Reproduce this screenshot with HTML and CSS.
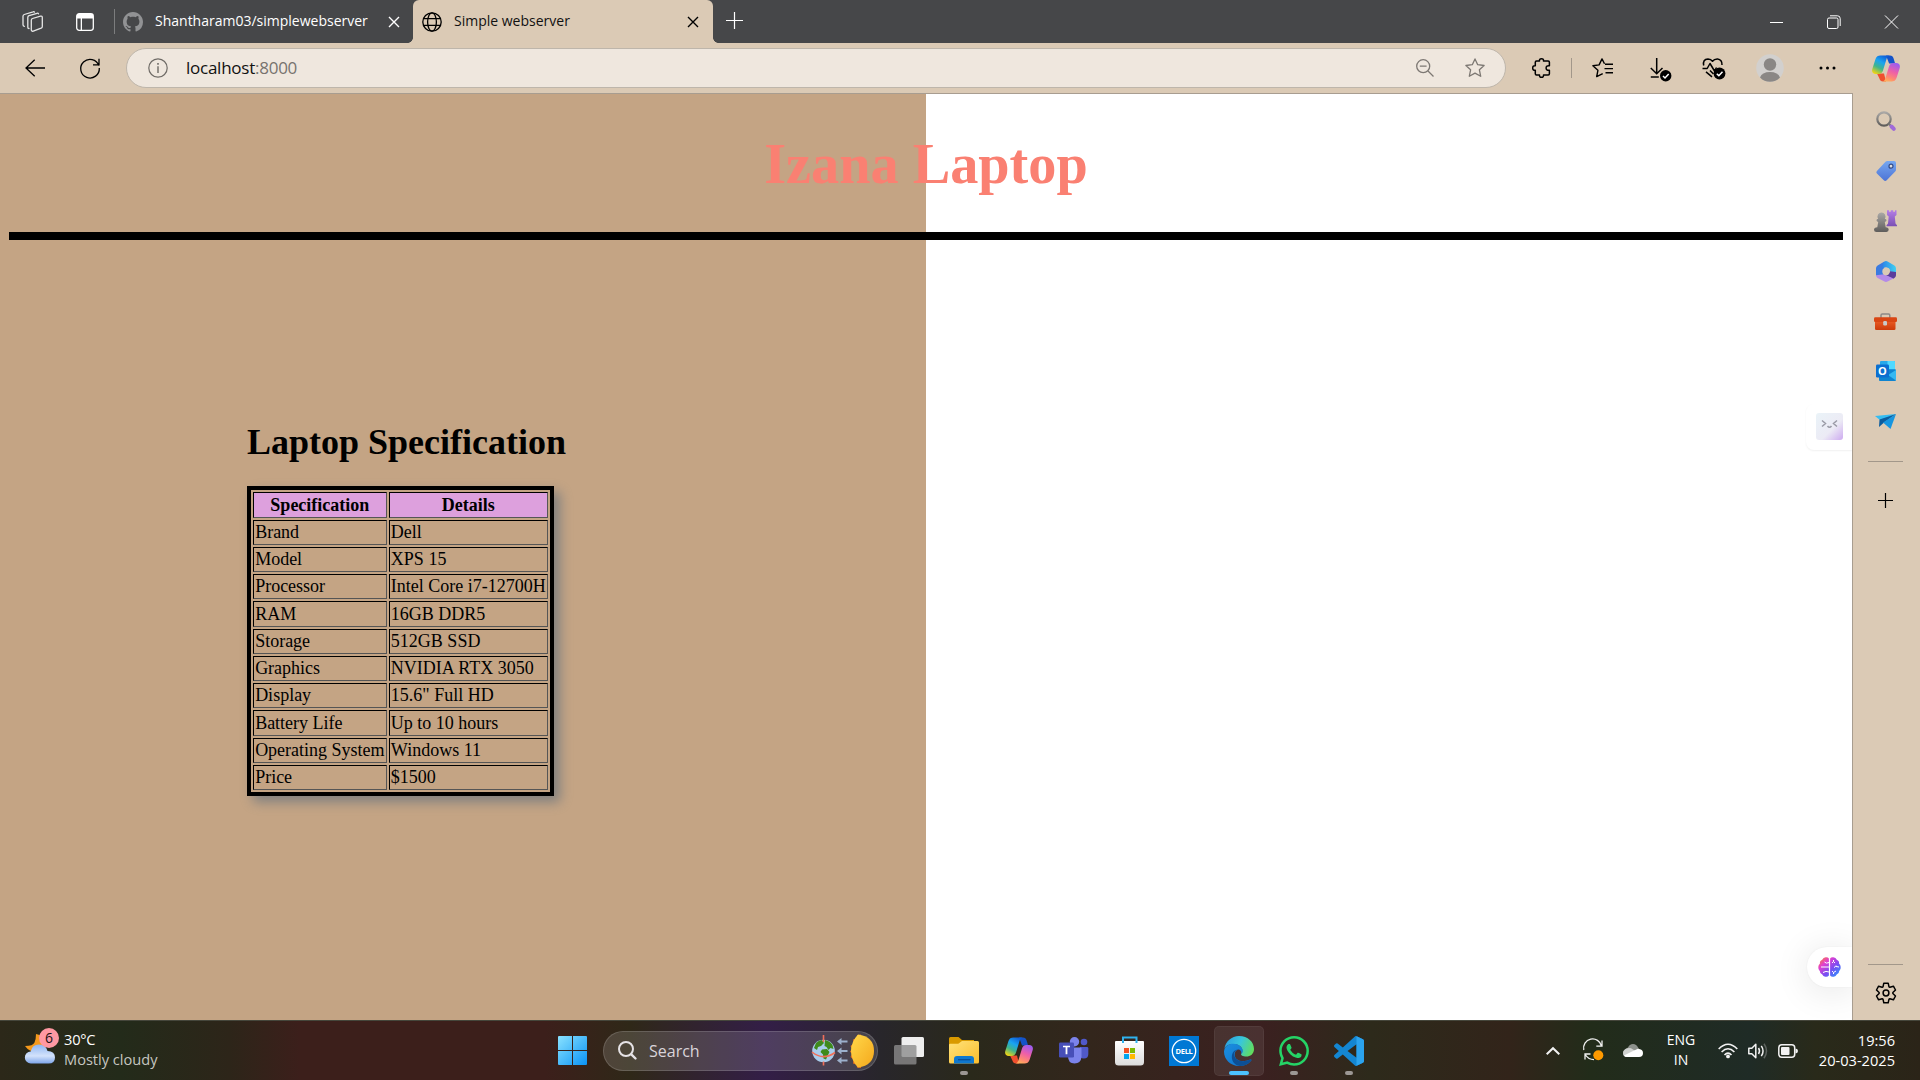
FILE: index.html
```html
<!DOCTYPE html>
<html lang="en">
<head>
<meta charset="utf-8">
<title>Simple webserver</title>
<link rel="stylesheet" href="styles.css">
</head>
<body>
<svg class="defs" width="0" height="0" aria-hidden="true">
  <defs>
    <linearGradient id="cpBlue" x1="0.7" y1="0" x2="0.2" y2="1"><stop offset="0" stop-color="#0f5fd8"/><stop offset=".35" stop-color="#1aa4f0"/><stop offset=".65" stop-color="#3fb58c"/><stop offset="1" stop-color="#f4d411"/></linearGradient>
    <linearGradient id="cpPink" x1="0.7" y1="0" x2="0.3" y2="1"><stop offset="0" stop-color="#9c5cf0"/><stop offset=".45" stop-color="#ee5fa8"/><stop offset=".8" stop-color="#ff8a70"/><stop offset="1" stop-color="#ffb05c"/></linearGradient>
    <linearGradient id="purple" x1="0" y1="0" x2="0" y2="1"><stop offset="0" stop-color="#b57ee6"/><stop offset="1" stop-color="#7a4fb4"/></linearGradient>
    <linearGradient id="gray" x1="0" y1="0" x2="0" y2="1"><stop offset="0" stop-color="#aaa8a6"/><stop offset="1" stop-color="#5f5d5b"/></linearGradient>
    <linearGradient id="tag" x1="0" y1="0" x2="0" y2="1"><stop offset="0" stop-color="#76a7f0"/><stop offset="1" stop-color="#4d74d6"/></linearGradient>
    <linearGradient id="red" x1="0" y1="0" x2="0" y2="1"><stop offset="0" stop-color="#f0622a"/><stop offset="1" stop-color="#cc3a0a"/></linearGradient>
    <linearGradient id="brain" x1="0" y1="0" x2="1" y2="1"><stop offset="0" stop-color="#ff8a1c"/><stop offset=".3" stop-color="#e23fd0"/><stop offset=".6" stop-color="#7a4df2"/><stop offset="1" stop-color="#1fa0ff"/></linearGradient>
    <linearGradient id="win" x1="0" y1="0" x2="1" y2="1"><stop offset="0" stop-color="#8ae2ff"/><stop offset="1" stop-color="#0a93f5"/></linearGradient>
    <linearGradient id="sun" x1="0" y1="0" x2="1" y2="1"><stop offset="0" stop-color="#ffd84a"/><stop offset="1" stop-color="#f5a81c"/></linearGradient>
    <linearGradient id="folder" x1="0" y1="0" x2="1" y2="1"><stop offset="0" stop-color="#ffe27a"/><stop offset="1" stop-color="#fbbd2c"/></linearGradient>
    <linearGradient id="edgeTop" x1="0" y1="0.3" x2="1" y2="0.6"><stop offset="0" stop-color="#2b9fe0"/><stop offset=".5" stop-color="#38c6dc"/><stop offset="1" stop-color="#62dd5c"/></linearGradient>
    <linearGradient id="edgeLow" x1="0" y1="0" x2="1" y2="1"><stop offset="0" stop-color="#1b8fe0"/><stop offset="1" stop-color="#0f6fc8"/></linearGradient>
    <linearGradient id="cloud" x1="0" y1="0" x2="0" y2="1"><stop offset="0" stop-color="#8fb6f2"/><stop offset=".6" stop-color="#d3e2fb"/><stop offset="1" stop-color="#7ea6ea"/></linearGradient>
    <linearGradient id="face" x1="0" y1="0" x2="1" y2="1"><stop offset="0" stop-color="#eaf3f8"/><stop offset=".6" stop-color="#ecebf5"/><stop offset="1" stop-color="#cdaaf0"/></linearGradient>
    <linearGradient id="bag" x1="0" y1="0" x2="0" y2="1"><stop offset="0" stop-color="#fff"/><stop offset="1" stop-color="#dcdcdc"/></linearGradient>
    <linearGradient id="m365a" x1="0" y1="0" x2="1" y2="0"><stop offset="0" stop-color="#2d86e8"/><stop offset="1" stop-color="#3fd0f2"/></linearGradient>
    <symbol id="copilot" viewBox="0 0 28 27">
      <path fill="#1453c8" d="M14 .5h4c2 0 3 1 3.600 3l1.500 5h-6z"/>
      <path fill="#f0502e" d="M5 18.500h7l2 8h-3c-2 0-3-1-3.600-3z"/>
      <path fill="url(#cpBlue)" d="M8.500.5h9c-1.600.4-2.300 1.500-2.900 3.300L11 15.500c-.7 2.200-2 3.500-4.300 3.500H3.800C1 19-.5 17 .3 14L3.500 4C4.300 1.600 6 .5 8.500.5z"/>
      <path fill="url(#cpPink)" d="M19.500 26.500h-9c1.600-.4 2.300-1.500 2.900-3.300L17 11.500C17.700 9.300 19 8 21.300 8h2.900c2.800 0 4.300 2 3.500 5l-3.200 10c-.8 2.400-2.500 3.500-5 3.500z"/>
    </symbol>
  </defs>
</svg>

<header class="tabstrip">
  <svg class="workspaces" width="22" height="22" viewBox="0 0 22 22" fill="none" stroke="#e6e6e6" stroke-width="1.300" stroke-linejoin="round" stroke-linecap="round"><path d="M9.300 9.200q0-1.300 1.200-1.700l8-2.300q1.800-.4 1.800 1.400v8.800q0 1.300-1.200 1.800l-7.800 2.900q-2 .6-2-1.300z"/><path d="M16.500 2.800q-.4-.8-1.500-.5L7 4.700q-1.200.4-1.200 1.700v9.800q0 1.200 1.200 1.300"/><path d="M12.500 1q-.6-.5-1.400-.2L2.200 3.500Q1 4 1 5.200v8.600q0 1.300 1.300 1.500"/></svg>
  <svg class="tab-actions" width="18" height="18" viewBox="0 0 18 18"><rect x=".7" y=".7" width="16.600" height="16.600" rx="2.500" fill="none" stroke="#fff" stroke-width="1.300"/><path fill="#fff" d="M1 1h16v4.500H1zM4.700 5H6v12H4.700z"/></svg>
  <span class="strip-divider"></span>
  <div class="tab">
    <svg width="20" height="20" viewBox="0 0 16 16" fill="#919294"><path d="M8 0C3.580 0 0 3.580 0 8c0 3.540 2.290 6.530 5.470 7.590.4.07.55-.17.55-.38 0-.19-.01-.82-.01-1.490-2.010.37-2.530-.49-2.690-.94-.09-.23-.48-.94-.82-1.130-.28-.15-.68-.52-.01-.53.63-.01 1.080.58 1.230.82.72 1.210 1.870.87 2.330.66.07-.52.28-.87.51-1.070-1.780-.2-3.640-.89-3.640-3.950 0-.87.31-1.590.82-2.150-.08-.2-.36-1.020.08-2.120 0 0 .67-.21 2.200.82.64-.18 1.320-.27 2-.27s1.360.09 2 .27c1.530-1.040 2.200-.82 2.200-.82.44 1.100.16 1.920.08 2.120.51.56.82 1.270.82 2.150 0 3.070-1.870 3.750-3.650 3.950.29.25.54.73.54 1.480 0 1.070-.01 1.930-.01 2.200 0 .21.15.46.55.38A8.010 8.010 0 0 0 16 8c0-4.420-3.580-8-8-8z"/></svg>
    <span class="tab-title">Shantharam03/simplewebserver</span>
    <svg class="tab-close" width="10" height="10" viewBox="0 0 10 10" stroke="#fff" stroke-width="1.400"><path d="M0 0l10 10M10 0L0 10"/></svg>
  </div>
  <div class="tab tab-active">
    <svg width="20" height="20" viewBox="0 0 20 20" fill="none" stroke="#000" stroke-width="1.300"><circle cx="10" cy="10" r="9.200"/><ellipse cx="10" cy="10" rx="4.400" ry="9.200"/><path d="M1.500 6.600h17M1.500 13.400h17"/></svg>
    <span class="tab-title">Simple webserver</span>
    <svg class="tab-close" width="10" height="10" viewBox="0 0 10 10" stroke="#000" stroke-width="1.400"><path d="M0 0l10 10M10 0L0 10"/></svg>
  </div>
  <svg class="new-tab" width="17" height="17" viewBox="0 0 17 17" stroke="#fff" stroke-width="1.200"><path d="M8.500 0v17M0 8.500h17"/></svg>
  <div class="window-buttons">
    <svg width="13" height="14" viewBox="0 0 13 14" stroke="#fff"><path d="M0 7.500h13"/></svg>
    <svg width="14" height="14" viewBox="0 0 14 14" fill="none" stroke="#fff"><rect x=".5" y="3" width="10.500" height="10.500" rx="1.500"/><path d="M3 .8h7.500q2.700 0 2.700 2.700V11"/></svg>
    <svg width="13" height="14" viewBox="0 0 13 14" stroke="#fff"><path d="M0 .5l13 13M13 .5l-13 13"/></svg>
  </div>
</header>

<nav class="toolbar">
  <svg width="20" height="18" viewBox="0 0 20 18" fill="none" stroke="#000" stroke-width="1.300"><path d="M20 9H1M9.700.7L1 9l8.700 8.300"/></svg>
  <svg class="reload" width="20" height="20" viewBox="0 0 20 20" fill="none" stroke="#000" stroke-width="1.300"><path d="M18.800 7.600A9.300 9.300 0 1 0 19.300 10M19 .8v6h-6"/></svg>
  <div class="address">
    <svg width="20" height="20" viewBox="0 0 20 20"><circle cx="10" cy="10" r="9.200" fill="none" stroke="#6f6b66" stroke-width="1.200"/><path fill="#6f6b66" d="M9.200 5h1.600v1.700H9.200zM9.300 8.300h1.400V15H9.300z"/></svg>
    <span class="url">localhost<span class="port">:8000</span></span>
    <svg class="zoom-out" width="18" height="18" viewBox="0 0 18 18" fill="none" stroke="#7d7873" stroke-width="1.300"><circle cx="7.200" cy="7.200" r="6.500"/><path d="M12 12l5.500 5.500M3.800 7.200h6.800"/></svg>
    <svg width="20" height="20" viewBox="0 0 20 20" fill="none" stroke="#7d7873" stroke-width="1.300" stroke-linejoin="round"><path d="M10 .9l2.700 5.800 6.400.8-4.700 4.300 1.300 6.500-5.700-3.200-5.700 3.200 1.300-6.500L.9 7.500l6.400-.8z"/></svg>
  </div>
  <svg class="puzzle" width="19" height="20" viewBox="0 0 19 20" fill="none" stroke="#000" stroke-width="1.500" stroke-linejoin="round"><path d="M3.300 4.300q0-1.200 1.200-1.200H7.500q-.3-2.400 2-2.400t2 2.400h4.700q1.200 0 1.200 1.200v3.400q-3.300-.4-3.300 2.300t3.300 2.300v3.400q0 1.200-1.200 1.200H11.500q.3 2.400-2 2.400t-2-2.400H4.500q-1.200 0-1.200-1.200v-3.400Q.7 12.500.7 10t2.600-2.300z"/></svg>
  <span class="bar-divider"></span>
  <svg class="favorites" width="21" height="20" viewBox="0 0 21 20" fill="none" stroke="#000" stroke-width="1.400" stroke-linejoin="round"><path d="M10.700 15.600l-6 3 1.200-6.300L.9 7.800l6.200-.9L10 .9l2.500 4.800M13 6.300h8M12.500 10.600H21M13.500 14.700H21"/></svg>
  <svg class="download" width="22" height="24" viewBox="0 0 22 24" fill="none" stroke="#000" stroke-width="1.500"><path d="M6.700 0v15.500M.8 10l5.900 5.700L12.500 10M.8 19h8"/><circle cx="15.700" cy="17.800" r="5.700" fill="#000" stroke="none"/><path stroke="#fff" d="M13 18l2 2 3.700-4"/></svg>
  <svg class="essentials" width="24" height="22" viewBox="0 0 24 22" fill="none" stroke="#000" stroke-width="1.500" stroke-linejoin="round"><path d="M1.700 7.500Q.5 1.200 6 1q3 0 4.500 2.300Q12.200.9 15.500 1q4.700.5 4.500 6M.5 10.500h4.700L8 5.500l4.500 7.500 2-3.500M4 13.800l6 5M8 12.500l3.500 3.500"/><circle cx="17.500" cy="15.500" r="5.900" fill="#000" stroke="none"/><path stroke="#fff" d="M14.800 15.700l2 2 3.700-4"/></svg>
  <svg class="avatar" width="28" height="28" viewBox="0 0 28 28"><circle cx="14" cy="14" r="13.800" fill="#d2d0ce"/><circle cx="14" cy="10.500" r="6.200" fill="#8a8785"/><path fill="#8a8785" d="M4 23.500Q6 18 14 18t10 5.500a13.800 13.800 0 0 1-20 0z"/></svg>
  <svg class="more" width="17" height="4" viewBox="0 0 17 4"><circle cx="2" cy="2" r="1.500"/><circle cx="8.500" cy="2" r="1.500"/><circle cx="15" cy="2" r="1.500"/></svg>
  <svg class="copilot-button" width="28" height="27"><use href="#copilot"/></svg>
</nav>

<div class="workspace">
  <main class="page">
    <h1 class="title">Izana Laptop</h1>
    <hr class="rule">
    <section class="spec">
      <h1 class="spec-title">Laptop Specification</h1>
      <table class="spec-table">
        <tr><th>Specification</th><th>Details</th></tr>
        <tr><td>Brand</td><td>Dell</td></tr>
        <tr><td>Model</td><td>XPS 15</td></tr>
        <tr><td>Processor</td><td>Intel Core i7-12700H</td></tr>
        <tr><td>RAM</td><td>16GB DDR5</td></tr>
        <tr><td>Storage</td><td>512GB SSD</td></tr>
        <tr><td>Graphics</td><td>NVIDIA RTX 3050</td></tr>
        <tr><td>Display</td><td>15.6" Full HD</td></tr>
        <tr><td>Battery Life</td><td>Up to 10 hours</td></tr>
        <tr><td>Operating System</td><td>Windows 11</td></tr>
        <tr><td>Price</td><td>$1500</td></tr>
      </table>
    </section>
    <div class="float-face">
      <svg width="27" height="27" viewBox="0 0 27 27" fill="none"><rect width="27" height="27" rx="3" fill="url(#face)"/><path stroke="#9a9ba6" stroke-width="1.500" d="M6 7.500l3.500 3L6 13.500M21 7.500l-3.500 3 3.500 3M11.500 13q2 2.500 4 0"/></svg>
    </div>
    <div class="float-brain">
      <svg width="23" height="20" viewBox="0 0 23 20"><path fill="url(#brain)" d="M10.900 1.500v17Q9.500 20.300 7.200 19.700 5 19.500 4.300 17.500 1.800 17 1.900 14.300 0 12.800.3 10q.2-2.300 1.600-3.300Q1.500 3.700 4.200 2.700 5.200.3 7.700.2 10 0 10.900 1.500zM12.100 1.500v17q1.400 1.800 3.700 1.200 2.200-.2 2.900-2.200 2.500-.5 2.400-3.200 1.900-1.500 1.600-4.300-.2-2.300-1.600-3.300.4-3-2.300-4Q17.800.3 15.300.2 13 0 12.100 1.500z"/><path fill="none" stroke="#fff" stroke-width="1" d="M11 5.500q-3 1.500-4.500-.5M3 10h8M5 15.500q3-2 6-.5M14 6l1.500-1.500L17 6M15.500 4.500V3M16 10.500q2-1 2-2M18 9.500l3 .5M14 14l1.500 1.500L18 14M15.500 15.500V17"/></svg>
    </div>
  </main>
  <aside class="sidebar">
    <div class="slot"><svg width="20" height="20" viewBox="0 0 20 20" fill="none"><circle cx="8" cy="8" r="6.700" stroke="url(#gray)" stroke-width="2.200"/><path stroke="#777" stroke-width="2" d="M12.500 12.500l2 2"/><path stroke="#a06ad8" stroke-width="4" stroke-linecap="round" d="M15.500 15.500l2.300 2.300"/></svg></div>
    <div class="slot"><svg width="20" height="20" viewBox="0 0 20 20"><path fill="url(#tag)" d="M9.500.8Q10.200 0 11.300 0H18q2 0 2 2v6.800q0 1-.8 1.800l-8.500 8.700q-1.500 1.300-2.900 0L.9 12.600q-1.200-1.300 0-2.600z"/><circle cx="15" cy="5.200" r="2" fill="#ddd" stroke="#324a86" stroke-width="1.200"/></svg></div>
    <div class="slot"><svg width="23" height="22" viewBox="0 0 23 22"><path fill="url(#gray)" d="M7.500 2.500a4 4 0 0 1 3.300 6.200q1.700.4 1.700 1.500T10.800 12l.9 5.200q3 .3 3 2.400T12.500 22h-10Q0 22 0 19.700t3.300-2.500L4.200 12q-1.700-.4-1.700-1.700t1.700-1.600a4 4 0 0 1 3.300-6.200z"/><path fill="url(#purple)" d="M13 .3h2v1.500h1.800V.3h2.400v1.500H21V.3h1.500V5l-1.700 1.500.7 7 1.500 1.700v1H12.500v-1l1.500-1.700.7-7L13 5z"/></svg></div>
    <div class="slot"><svg width="20" height="21" viewBox="0 0 20 21"><path fill="#3b7be0" d="M8 .7L1.600 4.400Q0 5.300 0 7.200v7.300l4.500 1.500 3.500-2.500V7z"/><path fill="url(#m365a)" d="M8 .7Q10-.5 12 .7l6.400 3.700Q20 5.300 20 7.200v6.300l-6-3.200q.2-3.500-4-4L6.500 7q-.5-4 1.500-6.300z"/><path fill="#5a3d9c" d="M20 11v3.200q0 1.800-1.600 2.700l-1.600 1L9 13.900q3.800.6 5-3.600z"/><path fill="#b48ae8" d="M0 14.300l8-1.100 9.500 4.400-5.500 2.700q-2 1.200-4 0L1.600 17Q0 16 0 14.300z"/><circle cx="10" cy="10.500" r="3.700" fill="#dbcab5"/></svg></div>
    <div class="slot"><svg width="23" height="17" viewBox="0 0 23 17"><path fill="none" stroke="#8d8986" stroke-width="1.500" d="M7 5V2.300Q7 1 8.300 1h6.200q1.300 0 1.300 1.300V5"/><rect x="1" y="6" width="20.500" height="11" rx="1.300" fill="url(#red)"/><path fill="#d94614" d="M1.300 4.300h20.400q1.300 0 1.300 1.300V8q0 1-1.300 1H1.300Q0 9 0 8V5.600q0-1.300 1.300-1.300z"/><rect x="9.200" y="8" width="3.800" height="4.500" rx="1.200" fill="#c9c9c9"/></svg></div>
    <div class="slot"><svg width="20" height="20" viewBox="0 0 20 20"><path fill="#28a8ea" d="M5 0h13q1 0 1 1v10H4V1q0-1 1-1z"/><path fill="#50d9ff" d="M11.500 0H18q1 0 1 1v7h-7.500z"/><path fill="#0f84d0" d="M3 8.500h17V19q0 1-1 1H4q-1 0-1-1z"/><path fill="#35b8f1" d="M20 9v10.500L12 14z"/><rect y="3.500" width="13" height="13" rx="1.200" fill="#0c6fd0"/><text class="outlook-o" x="6.500" y="14.300" text-anchor="middle">O</text></svg></div>
    <div class="slot"><svg width="21" height="15" viewBox="0 0 21 15"><path fill="#35bdf2" d="M21 0L0 2l5.500 4.500z"/><path fill="#0b5c9e" d="M21 0L4.500 5.500 4 13l4.500-4z"/><path fill="#1695e0" d="M21 0L8 8.500 15.500 15z"/></svg></div>
    <span class="side-divider"></span>
    <svg class="side-add" width="15" height="15" viewBox="0 0 15 15" stroke="#000" stroke-width="1.200"><path d="M7.500 0v15M0 7.500h15"/></svg>
    <span class="side-divider side-bottom"></span>
    <svg class="settings" width="22" height="22" viewBox="-11 -11 22 22" fill="none" stroke="#000" stroke-width="1.500" stroke-linejoin="round"><path d="M-3-6.200L-2.200-9.800H2.200L3-6.200 3.870-5.700 7.400-6.800 9.500-3 6.870-.5V.5L9.500 3 7.400 6.800 3.870 5.700 3 6.200 2.200 9.800H-2.200L-3 6.200-3.870 5.700-7.400 6.800-9.500 3-6.870.5V-.5L-9.500-3-7.400-6.800-3.870-5.700z"/><circle r="2.900"/></svg>
  </aside>
</div>

<footer class="taskbar">
  <div class="weather">
    <svg width="30" height="30" viewBox="0 0 30 30"><path fill="#f59a1c" d="M11 0q8 1 9 9t-7 9Q5 19 0 12q8 0 9.500-3.500T11 0z"/><path fill="url(#cloud)" d="M6 29.500a6 6 0 0 1-.3-12Q7 10.500 14 10.500t8.500 6.500q7.500.3 7.500 6.500 0 6-6.500 6z"/></svg>
    <span class="badge">6</span>
    <div class="weather-text"><span class="temp">30°C</span><span class="sky">Mostly cloudy</span></div>
  </div>
  <svg class="start" width="29" height="29" viewBox="0 0 29 29" fill="url(#win)"><path d="M1 0h13v14H0V1q0-1 1-1zM15 0h13q1 0 1 1v13H15zM0 15h14v14H1q-1 0-1-1zM15 15h14v13q0 1-1 1H15z"/></svg>
  <div class="search">
    <svg width="19" height="19" viewBox="0 0 19 19" fill="none" stroke="#e6e3e6" stroke-width="2"><circle cx="8" cy="8" r="7"/><path stroke-linecap="round" stroke-width="2.400" d="M13.300 13.300l4.200 4.200"/></svg>
    <span class="search-text">Search</span>
    <svg class="search-art" width="63" height="34" viewBox="0 0 63 34"><circle cx="11.500" cy="17" r="11.300" fill="#a9cdec"/><path fill="#3f8a1c" d="M4 9q3-3 6-3l2 3-3 3-3 1-1 3-3-2zM13 6q5 1 7.500 5l1 4-3-1-2 2-2-3-2-1zM10 15.500l5-.5 2.500 3-1.500 3-2 4.500-2.500-1-.5-4-2.500-2.500z"/><path fill="none" stroke="#f0705a" stroke-width="1.600" d="M0 18q11 9 23 .5M11.500 1v7M11.500 27.500v4"/><path fill="none" stroke="#9cb0cc" stroke-width="2" d="M27 7.500h8.500M27 17h8.500M27 26.500h8.500"/><path fill="#9cb0cc" d="M29.500 4v7L25 7.500zM29.500 13.500v7L25 17zM29.500 23v7l-4.500-3.500z"/><path fill="#e8701a" d="M49 .5l-4 .7-.3 3.300-3.700 1 .5 4-3 2.500 1.500 3-2 2.500 2 2.500-1.500 3 3 2.500-.5 4 3.700 1 .3 3 4 .5z"/><path fill="url(#sun)" d="M46 .5q16 2 16 16.500T46 33.500Q39 26 39 17T46 .5z"/></svg>
  </div>
  <svg class="task-view" width="30" height="28" viewBox="0 0 30 28"><rect x="7.500" width="22.500" height="20" rx="1.500" fill="#eee"/><rect y="8" width="22.500" height="19.500" rx="1.500" fill="#8b8b8b" fill-opacity=".8"/></svg>
  <div class="apps">
    <div class="app running"><svg width="30" height="27" viewBox="0 0 30 27"><path fill="#d99a00" d="M1.500 0h8l3.500 3h12v8H0V1.500Q0 0 1.500 0z"/><path fill="url(#folder)" d="M0 8q0-1.300 1.300-1.300h8L13 4h15.500Q30 4 30 5.500V25q0 1.500-1.500 1.500h-27Q0 26.500 0 25z"/><path fill="#0f78cf" d="M5 26.500V22q0-3 3-3h14q3 0 3 3v4.500z"/><path stroke="#0a4f98" stroke-width="1.300" d="M9 22.700h12.500"/></svg></div>
    <div class="app"><svg width="28" height="27"><use href="#copilot"/></svg></div>
    <div class="app"><svg width="30" height="27" viewBox="0 0 30 27"><circle cx="25" cy="5" r="3.300" fill="#5059c9"/><path fill="#5059c9" d="M21 10h7q1.300 0 1.300 1.300V17q0 4.500-4.500 4.500T20 18z"/><circle cx="15.500" cy="4.700" r="4.700" fill="#7b83eb"/><path fill="#7b83eb" d="M9 10.500h12.500q1 0 1 1v8Q22 26.500 15.500 26.500T9 19z"/><rect y="5.500" width="15" height="15" rx="1.300" fill="#474fb8"/><path fill="#fff" d="M4 8.700h7v1.600H8.400v7H6.600v-7H4z"/></svg></div>
    <div class="app"><svg width="29" height="30" viewBox="0 0 29 30"><path fill="none" stroke="#2fb2ee" stroke-width="2" d="M8 7V1.500h13.500V7"/><path fill="url(#bag)" d="M1 5h27q1 0 1 1v20q0 3.500-3.500 3.500h-22Q0 29.500 0 26V6q0-1 1-1z"/><path stroke="#2fb2ee" stroke-width="2" d="M8 5v2M21.500 5v2"/><path fill="#f25022" d="M9 12h5v5H9z"/><path fill="#7fba00" d="M15 12h5v5h-5z"/><path fill="#00a4ef" d="M9 18h5v5H9z"/><path fill="#ffb900" d="M15 18h5v5h-5z"/></svg></div>
    <div class="app"><svg width="30" height="30" viewBox="0 0 30 30"><path fill="#0078d4" d="M0 0h30v30H0z"/><circle cx="15" cy="15" r="11.700" fill="none" stroke="#fff" stroke-width="1.300"/><text class="dell" x="15" y="17.800" text-anchor="middle">DELL</text></svg></div>
    <div class="app active"><svg width="30" height="30" viewBox="0 0 30 30"><path fill="url(#edgeTop)" d="M.3 13C1.500 5.500 7.500 0 15 0c9 0 15 6 15 13 0 5-3.700 7.500-7.700 7.500-3.300 0-6-1.200-5-2.800 1.500-2.200 1.600-5.200-.8-7.200C11 6.500 2.500 7.500.3 13z"/><path fill="url(#edgeLow)" d="M0 15.500C.5 10 5 7.500 9.500 7.700c5 .1 9.300 3.300 9.300 7.300 0 1.300-.7 2.300-1.500 3 .5-2.500-1-4.500-3.100-4.500-2.200.7-3.500 2.500-3.500 5 0 6 6.800 8.500 15.500 5 .9-.3 1.500.2 1.100.9C24.500 28 20 30 15 30 6.500 30 0 23.500 0 15.500z"/><path fill="#0d4f95" d="M10.200 18c0 6 7.500 9.500 16 5.500.9-.3 1.500.2 1.100.9-3 4-7 5.600-11.300 5.600-6-.5-9-6-8-11 .7-3.600 3.200-5.700 6.200-5.500-2.400.7-4 2-4 4.500z"/></svg></div>
    <div class="app running"><svg width="30" height="30" viewBox="0 0 24 24" fill="#25d366"><path d="M17.472 14.382c-.297-.149-1.758-.867-2.030-.967-.273-.099-.471-.148-.67.15-.197.297-.767.966-.94 1.164-.173.199-.347.223-.644.075-.297-.15-1.255-.463-2.390-1.475-.883-.788-1.480-1.761-1.653-2.059-.173-.297-.018-.458.13-.606.134-.133.298-.347.446-.52.149-.174.198-.298.298-.497.099-.198.05-.371-.025-.52-.075-.149-.669-1.612-.916-2.207-.242-.579-.487-.5-.669-.51-.173-.008-.371-.01-.57-.01-.198 0-.52.074-.792.372-.272.297-1.040 1.016-1.040 2.479 0 1.462 1.065 2.875 1.213 3.074.149.198 2.096 3.200 5.077 4.487.709.306 1.262.489 1.694.625.712.227 1.360.195 1.871.118.571-.085 1.758-.719 2.006-1.413.248-.694.248-1.289.173-1.413-.074-.124-.272-.198-.57-.347m-5.421 7.403h-.004a9.870 9.870 0 0 1-5.031-1.378l-.361-.214-3.741.982.998-3.648-.235-.374a9.860 9.860 0 0 1-1.510-5.260c.001-5.450 4.436-9.884 9.888-9.884 2.640 0 5.122 1.030 6.988 2.898a9.825 9.825 0 0 1 2.893 6.994c-.003 5.450-4.437 9.884-9.885 9.884m8.413-18.297A11.815 11.815 0 0 0 12.050 0C5.495 0 .16 5.335.157 11.892c0 2.096.547 4.142 1.588 5.945L.057 24l6.305-1.654a11.882 11.882 0 0 0 5.683 1.448h.005c6.554 0 11.890-5.335 11.893-11.893a11.821 11.821 0 0 0-3.480-8.413z"/></svg></div>
    <div class="app running"><svg width="30" height="30" viewBox="0 0 24 24"><path fill="#1486d2" d="M23.150 2.587L18.210.21a1.494 1.494 0 0 0-1.705.29l-9.460 8.630-4.120-3.128a.999.999 0 0 0-1.276.057L.327 7.261A1 1 0 0 0 .326 8.740L3.899 12 .326 15.260a1 1 0 0 0 .001 1.479L1.650 17.940a.999.999 0 0 0 1.276.057l4.120-3.128 9.460 8.630a1.492 1.492 0 0 0 1.704.29l4.942-2.377A1.500 1.500 0 0 0 24 20.060V3.939a1.500 1.500 0 0 0-.85-1.352zm-5.146 14.861L10.826 12l7.178-5.448v10.896z"/><path fill="#2ba3ee" d="M18 .15l5.150 2.437A1.500 1.500 0 0 1 24 3.940v16.120a1.500 1.500 0 0 1-.85 1.350L18 23.850z"/></svg></div>
  </div>
  <div class="tray">
    <svg class="chevron" width="14" height="8" viewBox="0 0 14 8" fill="none" stroke="#f2f2f2" stroke-width="2"><path d="M.7 7.300L7 1.200l6.300 6.100"/></svg>
    <svg class="sync" width="21" height="21" viewBox="0 0 21 21" fill="none" stroke="#f2f2f2" stroke-width="1.300"><path d="M.8 10A9 9 0 0 1 18.500 6M19 .5v5.700h-5.700M2 19.500V14h5.500M2.500 15q3 4.500 8.500 4.700"/><circle cx="15.300" cy="15.300" r="5" fill="#ff9a00" stroke="none"/></svg>
    <svg class="onedrive" width="20" height="13" viewBox="0 0 20 13"><path fill="#8d918c" d="M5 3.500Q6.500 0 10 0t5 3.500L18 8 2 12Q0 11 0 8.500T5 3.500z"/><path fill="#d0d2d0" d="M4.500 4.200q3-.7 5.500 1.300l7 4L3 13q-3-.7-3-4t4.500-4.800z"/><path fill="#fff" d="M1 11.500l8.500-4.200L15 4.700q5 .3 5 4.300t-4 4H4q-2 0-3-1.500z"/></svg>
    <div class="lang"><span>ENG</span><span>IN</span></div>
    <svg class="wifi" width="20" height="16" viewBox="0 0 20 16" fill="none" stroke="#f2f2f2" stroke-width="1.600"><path d="M.7 6q9.300-9.500 18.600 0M3.600 9Q10 2.500 16.400 9M6.500 12Q10 8.200 13.500 12"/><circle cx="10" cy="13.400" r="1.900" fill="#f2f2f2" stroke="none"/></svg>
    <svg class="volume" width="20" height="16" viewBox="0 0 20 16" fill="none" stroke="#f2f2f2" stroke-width="1.500" stroke-linejoin="round"><path d="M.8 5.300h3l4-4v13.400l-4-4h-3zM10.500 5q2 3 0 6M13.300 2.800q3.500 5.200 0 10.400"/><path stroke="#5c625e" d="M16 .8q5 7.200 0 14.400"/></svg>
    <svg class="battery" width="20" height="14" viewBox="0 0 20 14"><rect x=".8" y=".8" width="15.900" height="12.400" rx="3" fill="none" stroke="#f2f2f2" stroke-width="1.500"/><rect x="3" y="3" width="8.500" height="8" rx="1" fill="#f2f2f2"/><path fill="#f2f2f2" d="M17.500 4.500q2.500.3 2.500 2.500t-2.500 2.500z"/></svg>
    <div class="clock"><span>19:56</span><span>20-03-2025</span></div>
  </div>
</footer>
</body>
</html>
```
FILE: styles.css
```css
* { box-sizing: border-box; }
body {
  margin: 0;
  width: 1920px;
  height: 1080px;
  overflow: hidden;
  display: flex;
  flex-direction: column;
  font-family: "Open Sans", "Noto Sans", sans-serif;
}
svg { display: block; flex: none; overflow: visible; }
.defs { position: absolute; }

.tabstrip {
  height: 43px;
  flex: none;
  background: #464749;
  display: flex;
  align-items: center;
  padding-left: 22px;
}
.tab-actions { margin-left: 32px; }
.strip-divider { width: 1px; height: 25px; margin-left: 20px; background: #7c7d7e; }
.tab {
  width: 298px;
  height: 43px;
  display: flex;
  align-items: center;
  padding: 1px 14px 0 8px;
  color: #fff;
  font-size: 14px;
}
.tab-title { margin-left: 12px; white-space: nowrap; line-height: 20px; padding-bottom: 3px; }
.tab-close { margin-left: auto; }
.tab-active {
  position: relative;
  width: 300px;
  padding: 1px 15px 0 9px;
  background: #dbcab5;
  color: #111;
  border-radius: 6px 6px 0 0;
}
.tab-active::before, .tab-active::after {
  content: "";
  position: absolute;
  bottom: 0;
  width: 5px;
  height: 5px;
}
.tab-active::before { left: -5px; background: radial-gradient(circle at 0 0, #464749 4.500px, #dbcab5 5px); }
.tab-active::after { right: -5px; background: radial-gradient(circle at 100% 0, #464749 4.500px, #dbcab5 5px); }
.new-tab { margin: -2px 0 0 13px; }
.window-buttons { margin-left: auto; display: flex; gap: 44px; padding-right: 22px; }

.toolbar {
  height: 50px;
  flex: none;
  background: #dbcab5;
  display: flex;
  align-items: center;
  padding-left: 25px;
}
.reload { margin-left: 35px; }
.address {
  width: 1380px;
  height: 40px;
  margin-left: 26px;
  border: 1px solid #beb6ab;
  border-radius: 20px;
  background: #efe7de;
  display: flex;
  align-items: center;
  padding: 0 20px 0 21px;
}
.url { margin-left: 18px; font-size: 17px; letter-spacing: -.25px; line-height: 24px; padding-bottom: 1px; color: #111; }
.port { color: #77736e; }
.zoom-out { margin: 0 31px 0 auto; }
.puzzle { margin-left: 26px; }
.bar-divider { width: 1px; height: 20px; margin-left: 20px; background: #a2978a; }
.favorites { margin-left: 20px; }
.download { margin: 3px 0 0 37px; }
.essentials { margin: 1px 0 0 30px; }
.avatar { margin-left: 30px; }
.more { margin-left: 35px; }
.copilot-button { margin-left: 36px; }

.workspace { height: 927px; flex: none; display: flex; }
.page {
  position: relative;
  width: 1852px;
  overflow: hidden;
  border-top: 1px solid #a89d90;
  background: linear-gradient(90deg, #c4a484 50%, #fff 50%);
  font-family: "Liberation Serif", "Times New Roman", serif;
  padding: 0 9px;
}
.title {
  margin: 38px 0 36px;
  text-align: center;
  font-size: 56.250px;
  line-height: 64px;
  color: salmon;
}
.rule { height: 8px; margin: 0; border: 0; background: #000; }
.spec { margin: 182px 0 0 238px; }
.spec-title { margin: 0 0 24.400px; font-size: 36px; line-height: 40px; }
.spec-table {
  border: 4px solid #000;
  border-spacing: 2.250px;
  font-size: 18px;
  box-shadow: 5.600px 5.600px 11.250px gray;
}
.spec-table th, .spec-table td {
  padding: 1.125px;
  border: 1px solid;
  border-color: #000 #555 #555 #000;
  white-space: nowrap;
}
.spec-table th { background: plum; }
.float-face {
  position: absolute;
  right: 0;
  top: 310px;
  width: 46px;
  height: 46px;
  padding: 9px 0 0 10px;
  border-radius: 8px 0 0 8px;
  background: #fff;
  box-shadow: 0 1px 2px rgba(0, 0, 0, .06);
}
.float-brain {
  position: absolute;
  right: 0;
  top: 853px;
  width: 45px;
  height: 40px;
  padding: 10px 0 0 11px;
  border-radius: 20px 0 0 20px;
  background: #fff;
  box-shadow: 0 4px 36px rgba(0, 0, 0, .11), 0 0 2px rgba(0, 0, 0, .06);
}

.sidebar {
  width: 68px;
  background: #dbcab5;
  border-left: 1px solid #a89d90;
  display: flex;
  flex-direction: column;
  align-items: center;
  padding: 3px 2px 16px 0;
}
.slot { width: 100%; height: 50px; display: flex; align-items: center; justify-content: center; }
.side-divider { width: 35px; height: 1px; margin-top: 15px; background: #a2978a; }
.side-add { margin: 31px 0 0; }
.side-bottom { margin-top: auto; margin-bottom: 17px; }
.outlook-o { font: bold 11px "Open Sans", sans-serif; fill: #fff; }

.taskbar {
  height: 60px;
  flex: none;
  display: flex;
  align-items: center;
  border-top: 1px solid #45463b;
  background: linear-gradient(90deg, #2c2819 0, #232b1a 120px, #2d2519 230px, #3c1f1b 300px, #3c1f1b 545px, #2f2818 630px, #331e47 765px, #28262b 880px, #2a291b 970px, #33261c 1090px, #3b2020 1260px, #2d2a1b 1370px, #32241a 1510px, #222c1a 1590px, #1f2b26 1750px, #292a1a 1815px, #2b2418 1920px);
}
.weather { position: relative; width: 558px; height: 59px; display: flex; padding: 13px 0 0 25px; }
.badge {
  position: absolute;
  left: 39px;
  top: 7px;
  width: 20px;
  height: 20px;
  border-radius: 50%;
  background: #ff98a2;
  color: #1a1113;
  font-size: 14px;
  line-height: 20px;
  text-align: center;
}
.weather-text { display: flex; flex-direction: column; margin: -5px 0 0 9px; font-size: 14.600px; line-height: 20px; }
.temp { color: #fff; letter-spacing: -.2px; }
.sky { color: #c6c6c0; }
.start { margin-right: 16px; }
.search {
  width: 275px;
  height: 40px;
  border: 1px solid rgba(255, 255, 255, .15);
  border-radius: 20px;
  background: rgba(255, 255, 255, .14);
  display: flex;
  align-items: center;
  padding: 0 2px 0 14px;
}
.search-text { margin-left: 12px; color: #d9d4da; font-size: 16px; line-height: 22px; }
.search-art { margin-left: auto; }
.task-view { margin-left: 16px; }
.apps { display: flex; gap: 5px; margin-left: 15px; }
.app { position: relative; width: 50px; height: 50px; border-radius: 5px; display: flex; align-items: center; justify-content: center; }
.running::after, .active::after {
  content: "";
  position: absolute;
  bottom: 1px;
  left: 21px;
  width: 8px;
  height: 4px;
  border-radius: 2px;
  background: #9c9794;
}
.active { background: rgba(255, 255, 255, .08); box-shadow: inset 0 0 0 1px rgba(255, 255, 255, .05); }
.active::after { left: 15px; width: 20px; background: #4cc2ff; }
.dell { font: bold 7.500px "Open Sans", sans-serif; fill: #fff; letter-spacing: -.3px; }
.tray { margin-left: auto; display: flex; align-items: center; padding-right: 25px; color: #fff; font-size: 14.600px; line-height: 20px; }
.sync { margin-left: 23px; }
.onedrive { margin-left: 19px; }
.lang { width: 40px; margin: -2px 0 0 18px; display: flex; flex-direction: column; align-items: center; font-size: 14px; }
.wifi { margin-left: 17px; }
.volume { margin-left: 10px; }
.battery { margin-left: 10px; }
.clock { width: 97px; margin-top: -2px; display: flex; flex-direction: column; align-items: flex-end; }
```
